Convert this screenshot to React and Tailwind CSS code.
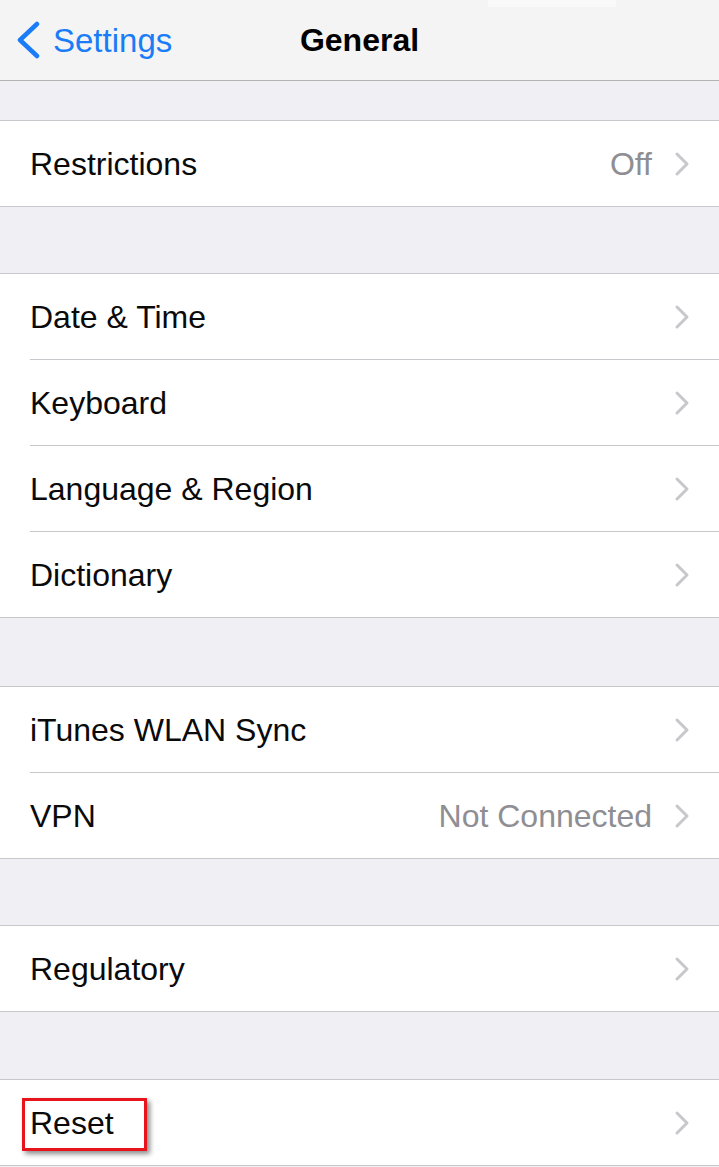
import React from 'react';

const font = { fontFamily: '"Liberation Sans", Arial, sans-serif' };

const Chevron = () => (
  <svg width="16" height="26" viewBox="0 0 16 26" className="shrink-0">
    <path d="M3 3 L13 13 L3 23" fill="none" stroke="#c7c7cc" strokeWidth="3" strokeLinecap="round" strokeLinejoin="round" />
  </svg>
);

const Row = ({ label, value, last, highlight }) => (
  <div className={`relative bg-white pl-[30px] ${last ? 'h-[85px]' : 'h-[86px]'}`}>
    <div className={`h-full flex items-center pr-[29px] ${last ? '' : 'border-b border-[#c8c7cc]'}`}>
      <span className="flex-1 text-[32px] text-[#0a0a0a] leading-none">{label}</span>
      {value && <span className="text-[32px] text-[#8e8e93] leading-none mr-[22px]">{value}</span>}
      <Chevron />
    </div>
    {highlight && (
      <div className="absolute left-[22px] top-[18px] w-[125px] h-[53px] border-[3px] border-[#e8141b] shadow-[3px_3px_5px_rgba(0,0,0,0.45)]" />
    )}
  </div>
);

const Group = ({ rows }) => (
  <div className="border-y border-[#c8c7cc]">
    {rows.map((r, i) => (
      <Row key={r.label} {...r} last={i === rows.length - 1} />
    ))}
  </div>
);

export default function App() {
  const groups = [
    [{ label: 'Restrictions', value: 'Off' }],
    [
      { label: 'Date & Time' },
      { label: 'Keyboard' },
      { label: 'Language & Region' },
      { label: 'Dictionary' },
    ],
    [{ label: 'iTunes WLAN Sync' }, { label: 'VPN', value: 'Not Connected' }],
    [{ label: 'Regulatory' }],
    [{ label: 'Reset', highlight: true }],
  ];
  const gaps = ['h-[39px]', 'h-[66px]', 'h-[68px]', 'h-[66px]', 'h-[67px]'];

  return (
    <div className="w-[719px] h-[1167px] overflow-hidden bg-[#efeff4]" style={font}>
      {/* Nav bar */}
      <div className="relative h-[81px] bg-[#f4f4f4] border-b border-[#b4b4b4] flex items-center">
        <div className="absolute left-[488px] top-0 w-[128px] h-[7px] bg-[#f9f9f9]" />
        <div className="flex items-center pl-[15px] text-[#1a7cf6]">
          <svg width="26" height="38" viewBox="0 0 26 38">
            <path d="M22 3 L5 19 L22 35" fill="none" stroke="#1a7cf6" strokeWidth="4.5" strokeLinecap="round" strokeLinejoin="round" />
          </svg>
          <span className="ml-[12px] text-[33px] leading-none">Settings</span>
        </div>
        <div className="absolute inset-x-0 top-0 h-[80px] flex items-center justify-center pointer-events-none">
          <span className="text-[32px] font-bold text-black leading-none">General</span>
        </div>
      </div>

      {groups.map((g, i) => (
        <React.Fragment key={i}>
          <div className={gaps[i]} />
          <Group rows={g} />
        </React.Fragment>
      ))}
    </div>
  );
}
